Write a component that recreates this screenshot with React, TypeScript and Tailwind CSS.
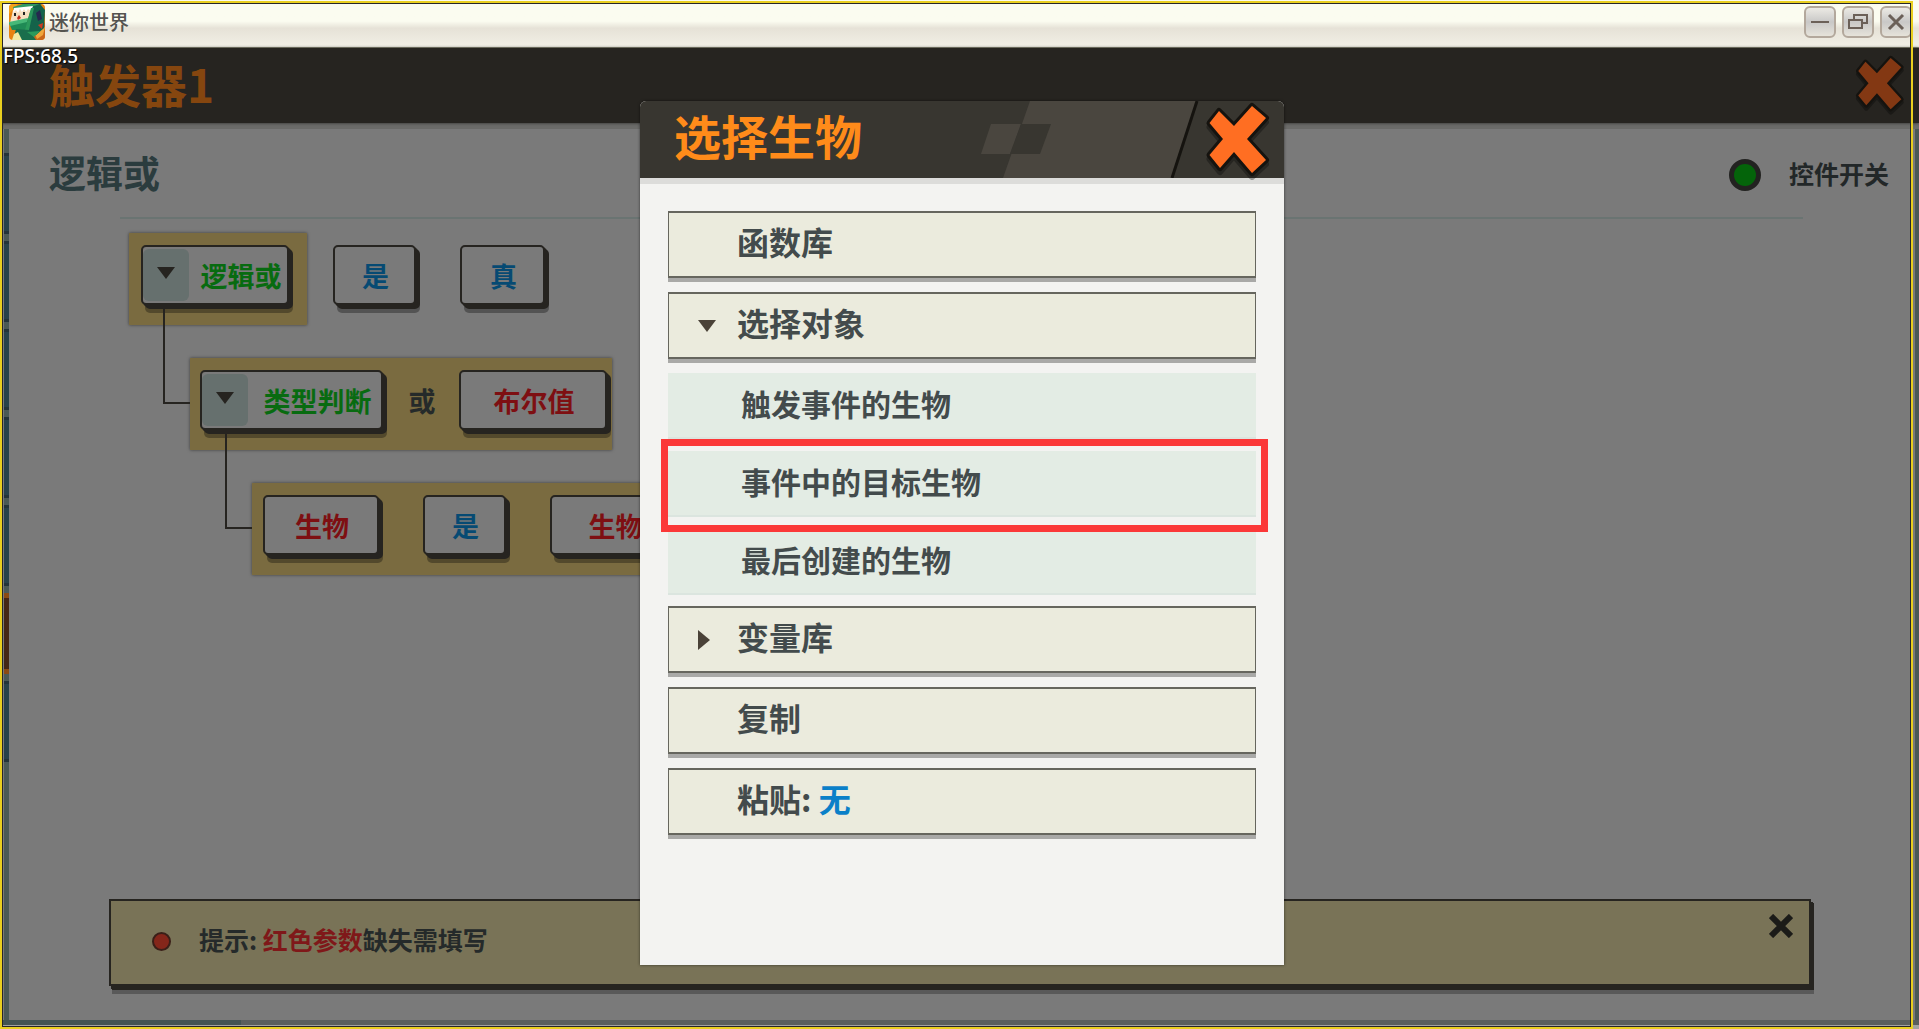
import { useState } from "react";
import type { ReactNode } from "react";

type Tone = "green" | "blue" | "red";

const TONE_CLASSES: Record<Tone, string> = {
  green: "text-[#086b10]",
  blue: "text-[#064a73]",
  red: "text-[#7e0f12]",
};

const TARGETS = ["触发事件的生物", "事件中的目标生物", "最后创建的生物"];

// Left edge of the trigger list that peeks out behind the panel
const SIDE_TABS = [false, false, false, false, false, true, false];

function Cross({ className, color }: { className: string; color: string }) {
  return (
    <svg viewBox="0 0 64 76" className={className} aria-hidden="true">
      <path
        d="M13 13 28 28 46 8 60 20 41 41 60 62 46 75 28 54 14 70 3.5 57 17 41 3.5 25Z"
        fill="#000"
        stroke="#000"
        strokeWidth="6"
        strokeLinejoin="round"
        opacity="0.3"
      />
      <path
        d="M13 9 28 24 46 4 60 16 41 37 60 58 46 71 28 50 14 66 3.5 53 17 37 3.5 21Z"
        fill={color}
        stroke="#15130f"
        strokeWidth="6"
        strokeLinejoin="round"
        paintOrder="stroke"
      />
    </svg>
  );
}

function AppIcon() {
  return (
    <svg viewBox="0 0 36 36" className="size-9 rounded-[4px]" aria-hidden="true">
      <rect width="36" height="36" fill="#e8820f" />
      <path d="M0 0H9L0 10Z" fill="#f5a01a" />
      <path d="M24 30 36 18V36H22Z" fill="#c9661a" />
      <path d="M26 30 36 23 34 31 28 35Z" fill="#f0a53a" />
      <path d="M4 3 14 0H33L25 4 5 6Z" fill="#2f9a62" />
      <path d="M22 3 31 0 36 6 35 24 27 31 16 26Z" fill="#14634a" />
      <path d="M4 6 22 4 19 15 1 19Z" fill="#f6dfc0" />
      <path d="M5 4 24 2 22 7 19 5 17 8 15 5 13 8 11 5 9 9 7 6 4 9Z" fill="#fff" />
      <path d="M0 19 19 15 17 26 3 26Z" fill="#1f8a55" />
      <path d="M0 18 19 14 18 18 1 22Z" fill="#47b878" />
      <path d="M22 4 25 4 20 26 16 26Z" fill="#2b9a5c" />
      <rect x="5" y="9" width="2" height="3" fill="#222" />
      <rect x="14" y="8" width="2" height="3" fill="#222" />
      <path d="M8 14 10 11 12 14 9 16Z" fill="#c42f1d" />
      <path d="M27 9 31 6 33 15 29 17Z" fill="#26284f" />
      <path d="M7 25 20 26 27 36H4Z" fill="#1a6e4c" />
      <path d="M5 30 9 28 13 36H3Z" fill="#f2e9a0" />
      <path d="M29 21 34 19 33 25Z" fill="#cf3a20" />
      <path d="M18 28 31 27 25 33Z" fill="#2b9a5c" />
    </svg>
  );
}

function WindowButton({ label, children }: { label: string; children: ReactNode }) {
  return (
    <button
      type="button"
      aria-label={label}
      className="flex size-8 items-center justify-center rounded-md border-2 border-[#b3a89c] bg-linear-to-b from-[#eceae4] via-[#c9c8c7] to-[#e6e3da]"
    >
      <svg viewBox="0 0 20 20" className="size-5" fill="none" stroke="#6b6058" strokeWidth="2">
        {children}
      </svg>
    </button>
  );
}

function Connector() {
  return (
    <span className="absolute -top-[50px] -left-[27px] h-24 w-[27px] border-b-2 border-l-2 border-[#262420]" />
  );
}

function Block({
  label,
  tone,
  width,
  expandable,
}: {
  label: string;
  tone: Tone;
  width: string;
  expandable?: boolean;
}) {
  return (
    <button
      type="button"
      className={`flex h-[60px] shrink-0 items-center rounded-[5px] border-2 border-[#262420] bg-[#7a7a7a] text-[27px] leading-none font-bold shadow-[2px_2px_0_#262420,4px_4px_0_#262420,4px_8px_0_#00000050] ${width} ${TONE_CLASSES[tone]}`}
    >
      {expandable && (
        <span className="flex h-[52px] w-[46px] shrink-0 items-center justify-center rounded-md bg-[#66706e]">
          <svg viewBox="0 0 18 12" className="mb-1 h-3 w-[18px]" aria-hidden="true">
            <path d="M0 0H18L9 12Z" fill="#262420" />
          </svg>
        </span>
      )}
      <span className={expandable ? "flex-1 pl-1.5 text-center" : "flex-1 pl-0.5 text-center"}>
        {label}
      </span>
    </button>
  );
}

function MenuItem({
  children,
  arrow,
  onClick,
}: {
  children: ReactNode;
  arrow?: "down" | "right";
  onClick?: () => void;
}) {
  return (
    <button
      type="button"
      onClick={onClick}
      className="flex h-[67px] w-full shrink-0 items-center border border-t-2 border-b-2 border-[#66665e] bg-[#ebebdd] text-[32px] leading-none font-bold text-[#434b4c] shadow-[0_4px_0_#a9a9a7]"
    >
      <span className="flex w-[68px] pl-[29px]">
        {arrow === "down" && (
          <svg viewBox="0 0 18 12" className="h-3 w-[18px]" aria-hidden="true">
            <path d="M0 0H18L9 12Z" fill="#4a4238" />
          </svg>
        )}
        {arrow === "right" && (
          <svg viewBox="0 0 12 20" className="h-5 w-3" aria-hidden="true">
            <path d="M0 0V20L12 10Z" fill="#4a4238" />
          </svg>
        )}
      </span>
      <span className="pb-2">{children}</span>
    </button>
  );
}

function TitleBar() {
  return (
    <div className="flex h-12 shrink-0 items-start border-b border-[#8c8c78] bg-linear-to-b from-[#fbfcf0] from-45% via-[#e6e2d7] via-60% to-[#f2f0e6] pr-[7px] pl-[9px]">
      <div className="flex items-center gap-1 pt-1">
        <AppIcon />
        <span className="text-xl leading-none font-medium text-[#555450]">迷你世界</span>
      </div>
      <div className="ml-auto flex gap-[6px] pt-[6px]">
        <WindowButton label="最小化">
          <path d="M1 10H19" />
        </WindowButton>
        <WindowButton label="还原">
          <path d="M1 8H14V16H1ZM6 7V3H19V11H15" />
        </WindowButton>
        <WindowButton label="关闭">
          <path d="M3 3 17 17M17 3 3 17" strokeWidth="3" />
        </WindowButton>
      </div>
    </div>
  );
}

function LogicTree() {
  return (
    <div className="ml-[120px] flex flex-col items-start gap-[33px] pt-[14px]">
      <div className="flex">
        <div className="h-[92px] w-[178px] bg-[#7a6b40] pt-3 pl-3 shadow-[0_0_3px_#00000080]">
          <Block label="逻辑或" tone="green" width="w-[148px]" expandable />
        </div>
        <div className="flex gap-[44px] pt-3 pl-[26px]">
          <Block label="是" tone="blue" width="w-[83px]" />
          <Block label="真" tone="blue" width="w-[85px]" />
        </div>
      </div>

      <div className="relative ml-[61px] flex h-[92px] w-[422px] bg-[#7a6b40] pt-3 pl-[10px] shadow-[0_0_3px_#00000080]">
        <Connector />
        <Block label="类型判断" tone="green" width="w-[183px]" expandable />
        <span className="flex h-[60px] w-[76px] items-center justify-center pl-0.5 text-[27px] leading-none font-bold text-[#252a2a]">
          或
        </span>
        <Block label="布尔值" tone="red" width="w-[148px]" />
      </div>

      <div className="relative ml-[123px] flex h-[92px] gap-[44px] bg-[#7a6b40] px-[11px] pt-3 shadow-[0_0_3px_#00000080]">
        <Connector />
        <Block label="生物" tone="red" width="w-[116px]" />
        <Block label="是" tone="blue" width="w-[83px]" />
        <Block label="生物" tone="red" width="w-[129px]" />
      </div>
    </div>
  );
}

function TipBar() {
  return (
    <div className="mt-auto mr-[104px] mb-[34px] ml-[100px] flex h-[87px] items-center border-2 border-[#262420] bg-[#797357] pl-[41px] shadow-[2px_3px_0_#262420,3px_4px_0_#262420,3px_8px_0_#00000045]">
      <span className="mb-0.5 size-[19px] rounded-full border-2 border-[#3a1f18] bg-[#84261a]" />
      <p className="pb-1.5 pl-7 text-[25px] leading-none font-bold text-[#252a2a]">
        提示: <span className="text-[#7f1819]">红色参数</span>缺失需填写
      </p>
      <button type="button" aria-label="关闭提示" className="mr-4 ml-auto self-start pt-[13px]">
        <svg viewBox="0 0 24 24" className="size-6" stroke="#1b1b18" strokeWidth="6">
          <path d="M2 2 22 22M22 2 2 22" />
        </svg>
      </button>
    </div>
  );
}

function PickerDialog() {
  const [open, setOpen] = useState(true);

  return (
    <div className="absolute inset-0 flex justify-center pt-[101px] pb-16 pl-[5px]">
      <section
        role="dialog"
        aria-labelledby="picker-title"
        className="flex w-[644px] flex-col rounded-t-md bg-[#f3f3f1] shadow-[0_0_3px_#00000090]"
      >
        <header className="relative flex h-[77px] shrink-0 items-center rounded-t-md bg-[#383630] pl-[34px] shadow-[0_6px_0_#dcdcda]">
          <svg
            viewBox="0 0 218 77"
            className="absolute top-0 right-[85px] h-[77px] w-[218px]"
            aria-hidden="true"
          >
            <path d="M49 0H216L191 77H22Z" fill="#4a463f" />
            <path d="M10 23H40L29 53H0Z" fill="#4a463f" />
            <path d="M40 23H70L59 53H29Z" fill="#383630" />
            <path d="M216 0 191 77" stroke="#15130f" strokeWidth="3" />
          </svg>
          <h2
            id="picker-title"
            className="relative pb-2.5 text-[47px] leading-none font-bold text-[#ff8b1a]"
          >
            选择生物
          </h2>
          <button type="button" aria-label="关闭" className="relative mr-[14px] ml-auto">
            <Cross className="h-[76px] w-16 overflow-visible" color="#ff6e22" />
          </button>
        </header>

        <div className="flex flex-col gap-[14px] px-7 pt-[33px]">
          <MenuItem>函数库</MenuItem>
          <MenuItem arrow={open ? "down" : "right"} onClick={() => setOpen(!open)}>
            选择对象
          </MenuItem>
          {open && (
            <ul className="-mb-[3px] flex flex-col gap-3">
              {TARGETS.map((name, i) => (
                <li key={name} className="relative">
                  <button
                    type="button"
                    className="flex h-[66px] w-full items-center border-b-2 border-[#dbe5df] bg-[#e3ece4] pb-1 pl-[73px] text-[30px] leading-none font-bold text-[#434b4c]"
                  >
                    {name}
                  </button>
                  {i === 1 && (
                    <span className="pointer-events-none absolute -top-3 -right-3 -left-[7px] z-10 h-[93px] border-[7px] border-[#fb3838]" />
                  )}
                </li>
              ))}
            </ul>
          )}
          <MenuItem arrow="right">变量库</MenuItem>
          <MenuItem>复制</MenuItem>
          <MenuItem>
            粘贴: <span className="text-[#0a80c8]">无</span>
          </MenuItem>
        </div>
      </section>
    </div>
  );
}

export default function App() {
  return (
    <div className="relative flex min-h-screen flex-col overflow-hidden bg-[#7a7a7a] font-['Noto_Sans_CJK_SC',sans-serif]">
      <TitleBar />

      <header className="relative z-0 flex h-[75px] shrink-0 items-center bg-[#262420] pr-[14px] pl-[49px] shadow-[0_0_3px_#000000a0,0_6px_0_#6b6b69]">
        <span className="absolute top-0 left-[3px] font-['Noto_Sans',sans-serif] text-[19px] leading-[17px] font-medium text-white [text-shadow:1px_1px_1px_#000]">
          FPS:68.5
        </span>
        <h1 className="pb-1.5 text-[46px] leading-none font-bold text-[#85460f]">触发器1</h1>
        <button type="button" aria-label="退出编辑" className="mb-1 ml-auto">
          <Cross className="h-[58px] w-[50px] overflow-visible" color="#833813" />
        </button>
      </header>

      <div className="flex flex-1 border-r-4 border-[#4a5956]">
        <aside className="ml-1 flex w-[5px] flex-col gap-[7px] bg-[#4a5956] pt-[30px]">
          {SIDE_TABS.map((active, i) => (
            <span
              key={i}
              className={
                active
                  ? "h-[81px] border-y-[5px] border-[#8a4a14] bg-[#432616]"
                  : "h-[81px] border-y-[3px] border-[#23333a] bg-[#27414a]"
              }
            />
          ))}
        </aside>

        <main className="flex flex-1 flex-col">
          <div className="flex h-[94px] items-center pt-[10px] pr-[26px] pl-10">
            <h2 className="pb-1.5 text-[37px] leading-none font-bold text-[#2b3c3e]">逻辑或</h2>
            <label className="ml-auto flex items-center gap-7 text-[25px] leading-none font-bold text-[#222728]">
              <input
                type="checkbox"
                defaultChecked
                className="size-8 appearance-none rounded-full border-5 border-[#222220] bg-[#04640a]"
              />
              <span className="pb-1">控件开关</span>
            </label>
          </div>
          <hr className="mr-[112px] ml-[111px] border-t-2 border-[#6a7472]" />
          <LogicTree />
          <TipBar />
        </main>
      </div>

      <footer className="flex h-[9px] shrink-0 items-start border-b-4 border-[#a3a3a0] bg-[#5a5f5d]">
        <span className="h-full w-[241px] bg-[#435452]" />
      </footer>

      <PickerDialog />

      {/* Window selection frame */}
      <div className="pointer-events-none absolute top-px right-[6px] bottom-0 left-0 border-2 border-[#e9cf1f]">
        <div className="h-full border border-[#26262a]" />
      </div>
    </div>
  );
}
